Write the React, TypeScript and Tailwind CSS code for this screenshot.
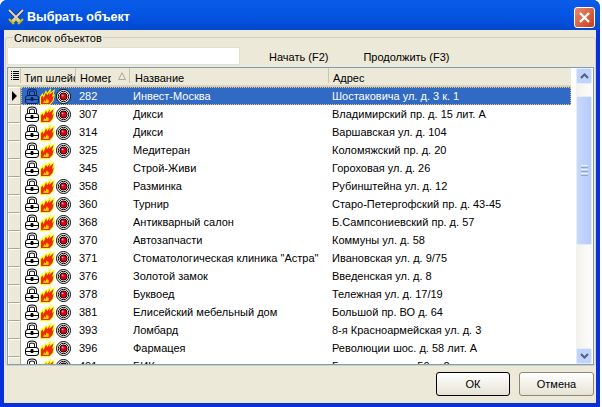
const rows: [string, string, string, boolean][] = [
  ["282", "Инвест-Москва", "Шостаковича ул. д. 3 к. 1", true],
  ["307", "Дикси", "Владимирский пр. д. 15 лит. А", true],
  ["314", "Дикси", "Варшавская ул. д. 104", true],
  ["325", "Медитеран", "Коломяжский пр. д. 20", true],
  ["345", "Строй-Живи", "Гороховая ул. д. 26", false],
  ["358", "Разминка", "Рубинштейна ул. д. 12", true],
  ["360", "Турнир", "Старо-Петергофский пр. д. 43-45", true],
  ["368", "Антикварный салон", "Б.Сампсониевский пр. д. 57", true],
  ["370", "Автозапчасти", "Коммуны ул. д. 58", true],
  ["371", "Стоматологическая клиника \"Астра\"", "Ивановская ул. д. 9/75", true],
  ["376", "Золотой замок", "Введенская ул. д. 8", true],
  ["378", "Буквоед", "Тележная ул. д. 17/19", true],
  ["381", "Елисейский мебельный дом", "Большой пр. ВО д. 64", true],
  ["393", "Ломбард", "8-я Красноармейская ул. д. 3", true],
  ["396", "Фармацея", "Революции шос. д. 58 лит. А", true],
  ["401", "БИК", "Гаванская ул. д. 50 к. 2", true],
];

const LockIcon = ({ selected }: { selected: boolean }) => {
  const ink = selected ? "#0a1f55" : "#000";
  const fill = selected ? "#316ac5" : "#fff";
  return (
    <svg width="14" height="16" viewBox="0 0 14 16" className="shrink-0">
      <path d="M3.5 8V4.5C3.5 2.5 5 2 7 2S10.5 2.5 10.5 4.5V8" fill="none" stroke={ink} strokeWidth="3" />
      <path d="M3.5 8V4.5C3.5 2.5 5 2 7 2S10.5 2.5 10.5 4.5V8" fill="none" stroke={fill} strokeWidth="1.2" />
      <rect x="0.5" y="7.5" width="13" height="8" rx="2.5" fill={fill} stroke={ink} />
      <rect x="1" y="11" width="12" height="1" fill={ink} />
      <rect x="5.5" y="9" width="3" height="4" rx="1" fill={ink} />
    </svg>
  );
};

const FlameIcon = () => (
  <svg width="15" height="17" viewBox="0 0 15 17" className="shrink-0">
    <path d="M0 17V9L2.5 5L3.5 7.5L6 2L7 5L11 0L10.5 4.5L15 1L13.5 7L15 6L13.5 13L10 17Z" fill="#ffff00" />
    <path d="M1 16V9.5L2.3 7.5L3.7 10L6 4.5L7.2 7.3L9.8 3.2L9.2 6.8L13.5 3.3L12 8.8L13.7 8L12.5 12.7L9.5 16Z" fill="#ee2a00" />
    <path d="M3 15L4.5 12L5.5 13.5L7 10L8 12.5L9 11.5L8.5 15Z" fill="#ffd000" />
  </svg>
);

const TargetIcon = () => (
  <svg width="15" height="15" viewBox="0 0 15 15" className="shrink-0">
    <circle cx="7.5" cy="7.5" r="7" fill="#fff" stroke="#000" />
    <circle cx="7.5" cy="7.5" r="5.2" fill="none" stroke="#000" />
    <circle cx="7.5" cy="7.5" r="3.6" fill="#e00018" stroke="#000" />
    <circle cx="6.6" cy="6.6" r="1" fill="#ff9a9a" />
  </svg>
);

const SwordsIcon = () => (
  <svg width="16" height="16" viewBox="0 0 16 16" className="shrink-0">
    <path d="M1 1L12 12M15 1L4 12" stroke="#3a3a3a" strokeWidth="3.4" />
    <path d="M1 1L12 12M15 1L4 12" stroke="#d4d8de" strokeWidth="1.8" />
    <path d="M1 10L6 15M15 10L10 15" stroke="#c8b81c" strokeWidth="2.2" />
    <path d="M8 10L5 13M8 10L11 13" stroke="#e4d840" strokeWidth="2" />
  </svg>
);

const ColumnsIcon = () => (
  <svg width="8" height="9" viewBox="0 0 8 9" shapeRendering="crispEdges">
    <path d="M0 0H1V1H0ZM0 2H1V3H0ZM0 4H1V5H0ZM0 6H1V7H0ZM0 8H1V9H0Z" fill="#000" />
    <path d="M2 0H8V1H2ZM2 2H8V3H2ZM2 4H8V5H2ZM2 6H8V7H2ZM2 8H8V9H2Z" fill="#000" />
  </svg>
);

const Chevron = ({ up }: { up: boolean }) => (
  <svg width="9" height="6" viewBox="0 0 9 6">
    <path d={up ? "M1 5L4.5 1.5L8 5" : "M1 1L4.5 4.5L8 1"} fill="none" stroke="#4d6185" strokeWidth="2" />
  </svg>
);

export default function App() {
  return (
    <div className="flex h-[407px] w-[600px] flex-col overflow-hidden rounded-t-[7px] bg-[#0831d9] font-['Liberation_Sans',sans-serif] text-[11px] leading-none text-black">
      <div className="flex h-[30px] shrink-0 items-center bg-gradient-to-b from-[#0a5ce8] via-[#0554e3] to-[#0348cf] pl-[8px] pr-[5px] pt-[4px]">
        <SwordsIcon />
        <span className="ml-[3px] text-[12.5px] font-bold text-white">Выбрать объект</span>
        <div className="ml-auto flex size-[21px] items-center justify-center rounded-[3px] border border-white bg-gradient-to-br from-[#e88a6c] to-[#c83a16]">
          <svg width="13" height="13" viewBox="0 0 13 13">
            <path d="M2 2L11 11M11 2L2 11" stroke="#fff" strokeWidth="2.4" />
          </svg>
        </div>
      </div>
      <div className="mx-1 mb-[4px] flex min-h-0 flex-1 flex-col bg-[#ece9d8]">
        <div className="relative ml-[1px] mt-[7px] flex h-[329px] shrink-0 flex-col rounded-[3px] border border-[#d0d0bf] px-[1px] pt-[9px]">
          <span className="absolute -top-[5px] left-[7px] bg-[#ece9d8] px-[1px] tracking-[0.1px]">Список объектов</span>
          <div className="flex h-[20px] shrink-0 items-start">
            <div className="h-[18px] w-[233px] border border-[#e4e1d0] bg-white" />
            <span className="ml-[29px] mt-[5px]">Начать (F2)</span>
            <span className="ml-[35px] mt-[5px]">Продолжить (F3)</span>
          </div>
          <div className="flex min-h-0 flex-1 overflow-hidden border border-[#7f9db9]">
            <div className="flex min-w-0 flex-1 flex-col overflow-hidden bg-white">
              <div className="flex h-[19px] w-[563px] shrink-0 items-start border-b-2 border-[#d8d2bd] bg-[#ece9d8]">
                <div className="flex h-[15px] w-[13px] shrink-0 items-center justify-center border-r border-[#c8c4b0] pl-[1px]">
                  <ColumnsIcon />
                </div>
                <div className="h-[15px] w-[55px] shrink-0 overflow-hidden whitespace-nowrap border-r border-[#c8c4b0] pl-[3px] pt-[5px]">Тип шлейф</div>
                <div className="flex h-[15px] w-[54px] shrink-0 overflow-hidden whitespace-nowrap border-r border-[#c8c4b0] pl-[4px] pt-[5px]">
                  <span className="w-[31px] shrink-0 overflow-hidden">Номер</span>
                  <svg width="8" height="8" viewBox="0 0 8 8" className="ml-[7px] mt-[-1px] shrink-0">
                    <path d="M4 0.8L7.5 7.5H0.5Z" fill="none" stroke="#aca899" />
                  </svg>
                </div>
                <div className="h-[15px] w-[199px] shrink-0 border-r border-[#c8c4b0] pl-[5px] pt-[5px]">Название</div>
                <div className="h-[15px] flex-1 pl-[4px] pt-[5px]">Адрес</div>
              </div>
              <div className="min-h-0 flex-1">
                {rows.map((row, index) => (
                  <div key={row[0]} className="flex h-[18px] w-[563px] items-center">
                    <div className="flex h-full w-[13px] shrink-0 items-center justify-center border-b border-r border-l border-t border-b-[#aca899] border-l-white border-r-[#aca899] border-t-white bg-[#ece9d8]">
                      {index === 0 && <div className="border-y-[5px] border-l-[5px] border-y-transparent border-l-black" />}
                    </div>
                    <div className={index === 0 ? "flex h-full flex-1 items-center bg-[#316ac5] text-white outline-1 -outline-offset-1 outline-dotted outline-[#e8c070]" : "flex h-full flex-1 items-center"}>
                      <div className="flex w-[55px] shrink-0 items-center gap-[1px] pl-[4px]">
                        <LockIcon selected={index === 0} />
                        <FlameIcon />
                        {row[3] && <TargetIcon />}
                      </div>
                      <div className="w-[54px] shrink-0 pl-[3px]">{row[0]}</div>
                      <div className="w-[199px] shrink-0 whitespace-nowrap pl-[3px]">{row[1]}</div>
                      <div className="whitespace-nowrap pl-[3px]">{row[2]}</div>
                    </div>
                  </div>
                ))}
              </div>
            </div>
            <div className="flex w-[17px] shrink-0 flex-col bg-gradient-to-r from-[#f3f1ec] to-[#fefefe] pr-[1px]">
              <div className="flex h-[16px] shrink-0 items-center justify-center rounded-[2px] border border-[#e4ecfd] bg-[#c1d3fb]">
                <Chevron up />
              </div>
              <div className="mt-[12px] flex h-[149px] shrink-0 flex-col items-center justify-center gap-[1px] rounded-[2px] border border-[#e4ecfd] bg-gradient-to-r from-[#c9d8fc] to-[#b6cbf9]">
                <div className="h-[1px] w-[7px] bg-[#eef4fe]" />
                <div className="h-[1px] w-[7px] bg-[#8aa6e0]" />
                <div className="h-[1px] w-[7px] bg-[#eef4fe]" />
                <div className="h-[1px] w-[7px] bg-[#8aa6e0]" />
                <div className="h-[1px] w-[7px] bg-[#eef4fe]" />
                <div className="h-[1px] w-[7px] bg-[#8aa6e0]" />
              </div>
              <div className="mt-auto flex h-[16px] shrink-0 items-center justify-center rounded-[2px] border border-[#e4ecfd] bg-[#c1d3fb]">
                <Chevron up={false} />
              </div>
            </div>
          </div>
        </div>
        <div className="flex flex-1 items-start justify-end gap-[9px] pr-[2px] pt-[6px]">
          <button className="h-[24px] w-[74px] rounded-[3px] border border-black bg-gradient-to-b from-white to-[#e6e3d4]">ОК</button>
          <button className="h-[24px] w-[75px] rounded-[3px] border border-[#8a8878] bg-gradient-to-b from-white to-[#e6e3d4]">Отмена</button>
        </div>
      </div>
    </div>
  );
}
